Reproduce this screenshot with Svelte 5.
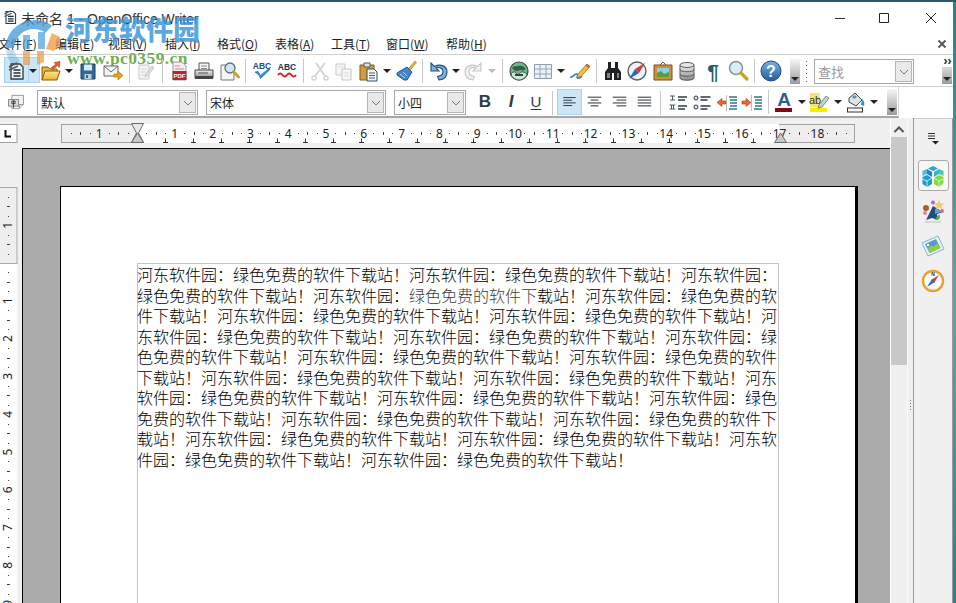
<script>
  const menu = [['文件','F',-2],['编辑','E',55],['视图','V',108],['插入','I',165],['格式','O',217],['表格','A',275],['工具','T',331],['窗口','W',386],['帮助','H',446]];
  const sizes = { i: 24, a: 10, s: 1 };
  function flow(items) {
    let end = 0;
    return items.map(([k, id, x]) => {
      const w = sizes[k];
      const left = Math.round(x - w / 2);
      const r = { k, id, gap: left - end, w };
      end = left + w;
      return r;
    });
  }
  const row1 = flow([
    ['i','doc',16],['a','',33],['i','open',51],['a','',69],['i','save',88],['i','mail',113],['s','',129],['i','edit',145],['s','',162],
    ['i','pdf',179],['i','print',204],['i','preview',229],['s','',245],['i','abc',262],['i','abc2',287],['s','',303],['i','cut',320],['i','copy',344],
    ['i','paste',369],['a','',387],['i','brush',406],['s','',422],['i','undo',438],['a','',456],['i','redo',474],['a','g',492],['s','',502],
    ['i','globe',519],['i','table',543],['a','',561],['i','pencil',580],['s','',596],['i','bino',613],['i','compass',637],['i','picture',663],
    ['i','db',687],['i','pilcrow',713],['i','zoom',738],['s','',754],['i','help',771]
  ]);
  const row2 = flow([
    ['i','num',678],['i','bul',702],['i','outd',727],['i','ind',752],['s','',768],['i','fcolor',784],['a','',802],['i','hl',820],['a','',838],['i','bgc',856],['a','',874]
  ].map(([k,i,x]) => [k,i,x-660]));
  const aligns = [
    ['M6 8h14M6 11h10M6 14h14M6 17h10', 557, true],
    ['M6 8h14M9 11h8M6 14h14M9 17h8', 582, false],
    ['M6 8h14M10 11h10M6 14h14M10 17h10', 607, false],
    ['M6 8h14M6 11h14M6 14h14M6 17h14', 632, false]
  ];
  const CM = 37.8, O = 137;
  const hDigits = [{ n: 1, x: O - CM }];
  for (let n = 1; n <= 18; n++) hDigits.push({ n, x: O + n * CM });
  const hTicks = [];
  for (let c = -2; c < 19; c++) for (const f of [0.25, 0.5, 0.75]) {
    const x = O + (c + f) * CM;
    if (x > 62 && x < 853) hTicks.push({ x: Math.round(x), half: f === 0.5 });
  }
  const tabs = Array.from({ length: 22 }, (_, i) => O + 28 * (i + 1));
  const V = 263;
  const vDigits = [{ n: 1, y: V - CM }];
  for (let n = 1; n <= 9; n++) vDigits.push({ n, y: V + n * CM });
  const vTicks = [];
  for (let c = -2; c < 10; c++) for (const f of [0.25, 0.5, 0.75]) {
    const y = V + (c + f) * CM;
    if (y > 188 && y < 603) vTicks.push({ y: Math.round(y), half: f === 0.5 });
  }
  const body = '河东软件园：绿色免费的软件下载站！'.repeat(23);
</script>

<svg class="defs" width="0" height="0" aria-hidden="true">
  <defs>
    <linearGradient id="gBlue" x1="0" y1="0" x2="0" y2="1"><stop offset="0" stop-color="#7ab0dc"/><stop offset="1" stop-color="#1f5f9e"/></linearGradient>
    <linearGradient id="gYel" x1="0" y1="0" x2="0" y2="1"><stop offset="0" stop-color="#ffe58a"/><stop offset="1" stop-color="#eeb42e"/></linearGradient>
    <linearGradient id="gGray" x1="0" y1="0" x2="0" y2="1"><stop offset="0" stop-color="#f2f2f2"/><stop offset="1" stop-color="#8a8a8a"/></linearGradient>
    <symbol id="doc" viewBox="0 0 24 24">
      <path d="M7 5h9l3 3v12H7z" fill="#f4f7f9" stroke="#2d3a44" stroke-width="1.3"/>
      <path d="M5 8l8-4M5 11l9-4" stroke="#47555f" stroke-width="1.4"/>
      <path d="M9.500 11h7M9.500 14h7M9.500 17h7" stroke="#1f2d38" stroke-width="1.5"/>
    </symbol>
    <symbol id="open" viewBox="0 0 24 24">
      <path d="M3 21V8h6l2 2h7v3" fill="#e8b63c" stroke="#8a5a10"/>
      <path d="M3 21l3-9h15l-3 9z" fill="url(#gYel)" stroke="#8a5a10"/>
      <path d="M12 9l5-4-2-1.500 6-1-.8 6-1.700-2-4 3.500z" fill="#e2602a" stroke="#a33c12" stroke-width=".6"/>
    </symbol>
    <symbol id="save" viewBox="0 0 24 24">
      <path d="M5 5h14v15H5z" fill="#2f6a9b" stroke="#173e60"/>
      <path d="M8 5.500h8v6H8z" fill="#dbe9f3"/>
      <path d="M8.500 15h7v5h-7z" fill="#b9cfdf"/>
      <path d="M10 16h2v3h-2z" fill="#2f6a9b"/>
    </symbol>
    <symbol id="mail" viewBox="0 0 24 24">
      <path d="M3 7h14v10H3z" fill="#f4f4f4" stroke="#6a6a6a"/>
      <path d="M3 7l7 6 7-6" fill="none" stroke="#6a6a6a"/>
      <path d="M13 15h4v-3l5 4.500-5 4.500v-3h-4z" fill="#f0a21e" stroke="#a86a10" stroke-width=".6"/>
    </symbol>
    <symbol id="edit" viewBox="0 0 24 24">
      <path d="M6 6h10v14H6z" fill="#f5f5f5" stroke="#c9c9c9"/>
      <path d="M8 10h6M8 13h5M8 16h5" stroke="#d4d4d4"/>
      <path d="M13 15l6-8 2 1.500-6 8-3 1z" fill="#e2e2e2" stroke="#c4c4c4"/>
    </symbol>
    <symbol id="pdf" viewBox="0 0 24 24">
      <path d="M6 3h9l4 4v14H6z" fill="#f3eeee" stroke="#9e9e9e"/>
      <path d="M8 7h5M8 10h9" stroke="#d58a8a" stroke-width="1.200"/>
      <rect x="5.500" y="12" width="14" height="9" fill="#b5272b"/>
      <text x="12.500" y="19" font-size="6" font-weight="700" text-anchor="middle" fill="#fff" font-family="Liberation Sans, sans-serif">PDF</text>
    </symbol>
    <symbol id="print" viewBox="0 0 24 24">
      <path d="M7 4h10v8H7z" fill="#f5f5f5" stroke="#555"/>
      <path d="M9 7h6M9 9.500h6" stroke="#888"/>
      <path d="M3 11h18v8H3z" fill="url(#gGray)" stroke="#444"/>
      <path d="M3 17h18v3H3z" fill="#444"/>
      <path d="M6 14h10" stroke="#555"/>
    </symbol>
    <symbol id="preview" viewBox="0 0 24 24">
      <path d="M4 6h11l2 3v12H4z" fill="#f4f6f8" stroke="#6d7882"/>
      <circle cx="13" cy="9" r="5" fill="#cfe6f5" stroke="#5f6f7c" stroke-width="1.300"/>
      <path d="M16.500 12.500l5 5.500" stroke="#c9a227" stroke-width="2.800" stroke-linecap="round"/>
    </symbol>
    <symbol id="abc" viewBox="0 0 24 24">
      <text x="12" y="10" font-size="8.500" font-weight="700" text-anchor="middle" fill="#1d4d78" font-family="Liberation Sans, sans-serif">ABC</text>
      <path d="M5 13l4 3 1.500 3.500L20 10.500l-2.500 0L10.500 16.500 8 12.500z" fill="#3a8fd2" stroke="#1d6aa8" stroke-width=".7"/>
    </symbol>
    <symbol id="abc2" viewBox="0 0 24 24">
      <text x="12" y="11" font-size="8.500" font-weight="700" text-anchor="middle" fill="#1e3346" font-family="Liberation Sans, sans-serif">ABC</text>
      <path d="M3 16q2.250-3 4.500 0t4.500 0 4.500 0 4.500 0" fill="none" stroke="#d02424" stroke-width="1.800"/>
    </symbol>
    <symbol id="cut" viewBox="0 0 24 24">
      <path d="M8 4l9 13M17 4l-10 13" stroke="#d4d4d4" stroke-width="2"/>
      <circle cx="6" cy="19" r="2" fill="none" stroke="#d4d4d4" stroke-width="1.500"/>
      <circle cx="18" cy="19" r="2" fill="none" stroke="#d4d4d4" stroke-width="1.500"/>
    </symbol>
    <symbol id="copy" viewBox="0 0 24 24">
      <path d="M4 5h9v11H4z" fill="#f6f6f6" stroke="#c9c9c9"/>
      <path d="M10 10h9v11h-9z" fill="#f8f8f8" stroke="#c4c4c4"/>
      <path d="M6 8h5M12 14h5M12 17h5" stroke="#d8d8d8"/>
    </symbol>
    <symbol id="paste" viewBox="0 0 24 24">
      <path d="M3 6h14v15H3z" fill="#d79b3a" stroke="#80581a"/>
      <path d="M7 4h6v4H7z" fill="#dfe3e6" stroke="#555"/>
      <path d="M10 10h7l3 3v9H10z" fill="#f4f8fb" stroke="#2e4c66"/>
      <path d="M12 14h6M12 16.500h6M12 19h6" stroke="#3b627f"/>
    </symbol>
    <symbol id="brush" viewBox="0 0 24 24">
      <path d="M14 10l7-8 1.500 1.500-7 8.500z" fill="#e5b63a" stroke="#96741a" stroke-width=".6"/>
      <path d="M13 8l5 5-5 8-3 0-7-5 0-2z" fill="#3f87c9" stroke="#1e5a92"/>
      <path d="M6 15l5 4M9 13l4 4" stroke="#bcdcf3" stroke-width=".9"/>
    </symbol>
    <symbol id="undo" viewBox="0 0 24 24">
      <path d="M5 4v8h8l-3-3c3-1.500 7 0 7 3.500 0 3-2.500 4.500-5.500 5L13 21c5-.5 8-3.700 8-8 0-6-7-8.500-12.500-5.500z" fill="#7fb2de" stroke="#1f4f7f" stroke-width="1.100"/>
    </symbol>
    <symbol id="redo" viewBox="0 0 24 24">
      <path d="M19 4v8h-8l3-3c-3-1.500-7 0-7 3.500 0 3 2.500 4.500 5.500 5L11 21c-5-.5-8-3.700-8-8 0-6 7-8.500 12.500-5.500z" fill="#f0f0f0" stroke="#c6c6c6" stroke-width="1.100"/>
    </symbol>
    <symbol id="globe" viewBox="0 0 24 24">
      <circle cx="12" cy="12" r="9" fill="#6fb58a" stroke="#3a4a44" stroke-width="1.200"/>
      <path d="M5 9c3-3 4-1 6-2 3-1 6 0 8 3-2 1-3 2-5 1-2 0-3 1-4 1-2 0-3-1-5-3z" fill="#2f5e4b"/>
      <path d="M4 15c1-2 4-3 5-1s3 2 4 0 5-1 7 1c-1 4-5 6-8 6s-7-2-8-6z" fill="#cfe6d6" stroke="#3a4a44" stroke-width=".9"/>
      <path d="M8 16h8" stroke="#33433d" stroke-width="2"/>
    </symbol>
    <symbol id="table" viewBox="0 0 24 24">
      <path d="M3.500 5.500h17v14h-17z" fill="#eaf2f8" stroke="#8ca0b0"/>
      <path d="M3.500 10h17M3.500 15h17M9 5.500v14M15 5.500v14" stroke="#94a8b8"/>
    </symbol>
    <symbol id="pencil" viewBox="0 0 24 24">
      <path d="M2 18c3 1 5-4 7-3s-1 4 1 4 3-1 4-2" fill="none" stroke="#3c8ad0" stroke-width="1.800"/>
      <path d="M10 15l9-10 3 2.500-9 10-4 1.500z" fill="#f0c040" stroke="#8a6a18" stroke-width=".8"/>
      <path d="M19 5l3 2.500-1.500 1.500-3-2.500z" fill="#d9534a"/>
    </symbol>
    <symbol id="bino" viewBox="0 0 24 24">
      <path d="M7 3h3v6h4V3h3v6l3 4v8h-7v-7h-2v7H4v-8l3-4z" fill="#1f2225"/>
      <path d="M6 14h3v5H6zM16 14h2v5h-2z" fill="#7d8388"/>
    </symbol>
    <symbol id="compass" viewBox="0 0 24 24">
      <circle cx="12" cy="12" r="9" fill="#eff3f6" stroke="#59626a" stroke-width="1.400"/>
      <path d="M20 4l-6 10-4-4z" fill="#d83a34"/>
      <path d="M4 20l6-10 4 4z" fill="#2a68b8"/>
    </symbol>
    <symbol id="picture" viewBox="0 0 24 24">
      <path d="M9 6l3-3 3 3" fill="none" stroke="#7a5520"/>
      <path d="M3 6h18v15H3z" fill="#cf8f42" stroke="#7a4f18"/>
      <path d="M6 9h12v9H6z" fill="#8ad0e8"/>
      <path d="M6 18v-4l4-2 3 3 5-2v5z" fill="#5a9a3a"/>
    </symbol>
    <symbol id="db" viewBox="0 0 24 24">
      <path d="M5 6v13c0 3 14 3 14 0V6z" fill="url(#gGray)" stroke="#5c5c5c"/>
      <ellipse cx="12" cy="6" rx="7" ry="2.500" fill="#e6e6e6" stroke="#5c5c5c"/>
      <path d="M5 10.500c0 3 14 3 14 0M5 15c0 3 14 3 14 0" fill="none" stroke="#5c5c5c"/>
    </symbol>
    <symbol id="pilcrow" viewBox="0 0 24 24">
      <text x="12" y="20" font-size="21" font-weight="700" text-anchor="middle" fill="#1f5f72" font-family="Liberation Sans, sans-serif">¶</text>
    </symbol>
    <symbol id="zoom" viewBox="0 0 24 24">
      <circle cx="10" cy="9" r="6.500" fill="#dcecf6" stroke="#8595a2" stroke-width="1.500"/>
      <path d="M15 14l6 6" stroke="#c9a227" stroke-width="3.200" stroke-linecap="round"/>
    </symbol>
    <symbol id="help" viewBox="0 0 24 24">
      <circle cx="12" cy="12" r="10" fill="url(#gBlue)" stroke="#174b8a"/>
      <text x="12" y="18" font-size="16" font-weight="700" text-anchor="middle" fill="#fff" font-family="Liberation Sans, sans-serif">?</text>
    </symbol>
    <symbol id="style" viewBox="0 0 24 24">
      <path d="M7 4h14v11l-5 5H7z" fill="#f1f1f1" stroke="#8a8a8a"/>
      <path d="M16 20v-5h5" fill="#ddd" stroke="#8a8a8a"/>
      <path d="M3 9h12v8H3z" fill="#dcdcdc" stroke="#777"/>
      <path d="M9 10v9M7 11h4v3H7z" fill="none" stroke="#333"/>
    </symbol>
    <symbol id="num" viewBox="0 0 24 24">
      <path d="M4 6h5M6.500 6v4M4 10h5M3.500 15h6M5.500 15v4M7.500 15v4M3.500 19h6" stroke="#3c4c5a" stroke-width=".9" fill="none"/>
      <path d="M12 7h9M12 10h7M12 16h9M12 19h7" stroke="#2d3a44" stroke-width="1.300"/>
    </symbol>
    <symbol id="bul" viewBox="0 0 24 24">
      <circle cx="6" cy="8" r="2" fill="#dce6ee" stroke="#2d3a44"/>
      <circle cx="6" cy="17" r="2" fill="#dce6ee" stroke="#2d3a44"/>
      <path d="M10.500 7h10M10.500 10h7M10.500 16h10M10.500 19h7" stroke="#2d3a44" stroke-width="1.300"/>
    </symbol>
    <symbol id="outd" viewBox="0 0 24 24">
      <path d="M2 12.500l5-4v2.500h4v3H7v2.500z" fill="#e8683a" stroke="#a83c18" stroke-width=".6"/>
      <path d="M14 7h8M15 10h7M15 13h7M15 16h7M14 19h8" stroke="#2c7a8a" stroke-width="1.300"/>
      <path d="M11.500 5v16" stroke="#aaa" stroke-width=".8"/>
    </symbol>
    <symbol id="ind" viewBox="0 0 24 24">
      <path d="M11 12.500l-5-4v2.500H2v3h4v2.500z" fill="#e8683a" stroke="#a83c18" stroke-width=".6"/>
      <path d="M14 7h8M15 10h7M15 13h7M15 16h7M14 19h8" stroke="#2c7a8a" stroke-width="1.300"/>
      <path d="M11.500 5v16" stroke="#aaa" stroke-width=".8"/>
    </symbol>
    <symbol id="fcolor" viewBox="0 0 24 24">
      <text x="12" y="16" font-size="19" font-weight="700" text-anchor="middle" fill="#2d5f92" font-family="Liberation Sans, sans-serif">A</text>
      <rect x="3" y="18" width="17" height="4" fill="#800a12"/>
    </symbol>
    <symbol id="hl" viewBox="0 0 24 24">
      <rect x="2" y="18" width="17" height="4" fill="#f2f200"/>
      <rect x="2" y="3" width="10" height="14" fill="#f5e27a"/>
      <text x="7" y="14" font-size="11" text-anchor="middle" fill="#333" font-family="Liberation Sans, sans-serif">ab</text>
      <path d="M11 15l7-9 3 2-7 9-4 1z" fill="#c7d2d8" stroke="#5f7a50" stroke-width=".8"/>
    </symbol>
    <symbol id="bgc" viewBox="0 0 24 24">
      <rect x="3.500" y="18" width="15" height="4" fill="#fff" stroke="#333"/>
      <path d="M5 8l6-5 7 7-6 6-7-4z" fill="#dbe4ea" stroke="#3e4a52"/>
      <path d="M8 7l3-2 2 2-3 2z" fill="#7c8a94"/>
      <path d="M18 9c2 2 3 4 2 7-1-1-2-1-3-1z" fill="#2f8fc0"/>
    </symbol>
    <symbol id="cube" viewBox="0 0 24 24">
      <path d="M12 2l5 2.500L12 7 7 4.500z" fill="#2f9fd6"/>
      <path d="M6 5l5 3v5l-5-3z" fill="#1f86c4"/>
      <path d="M1.500 7L6 5v5l-4.500 2z" fill="#4fc0d8"/>
      <path d="M13 8l5-3v5l-5 3z" fill="#38b6c6"/>
      <path d="M18 5l4.500 2v5L18 10z" fill="#4fc6a4"/>
      <path d="M1.500 13L6 11l5 3v6l-5 3-4.500-3z" fill="#1f9fd0"/>
      <path d="M13 14l5-3 4.500 2v6L18 23l-5-3z" fill="#86d93a"/>
      <path d="M6 17l5-3M18 17l-5-3M18 17l4.500-2M18 17v6M6 17v6M6 17l-4.500-2" stroke="#eafaf2" stroke-width=".8" fill="none"/>
    </symbol>
    <symbol id="sstyle" viewBox="0 0 24 24">
      <path d="M5 21L12 7l10 6-6 2 1 6-6-2z" fill="#1c4d84"/>
      <path d="M14 21c5 0 6-3 4-6-1 3-3 2-4 6z" fill="#52b040"/>
      <path d="M14 10c2-1 5 1 6 3l-6 2z" fill="#5aa5e0"/>
      <circle cx="5" cy="9" r="3" fill="#a6602a"/>
      <circle cx="4" cy="14" r="2" fill="#e87bbf"/>
      <circle cx="12" cy="3.500" r="2" fill="#b65dd0"/>
      <path d="M18 1l1.500 3.200 3.500.4-2.600 2.300.7 3.400-3.100-1.800-3 1.800.7-3.400-2.600-2.300 3.500-.4z" fill="#f5cc55"/>
      <circle cx="21" cy="12" r="2" fill="#e36a9a"/>
      <path d="M4 23h16" stroke="#ccc" stroke-width="1.500"/>
    </symbol>
    <symbol id="gallery" viewBox="0 0 24 24">
      <path d="M1 9l16-7 6 13-16 7z" fill="#e8f6f6" stroke="#7fb7c2"/>
      <path d="M4 10l11-5 4.500 9-11 5z" fill="#5a96d6"/>
      <path d="M8.500 19l11-5-2.500-5-5 4-2-2-3 4z" fill="#8cd04a"/>
      <circle cx="7" cy="11" r="1.200" fill="#fff"/>
    </symbol>
    <symbol id="nav" viewBox="0 0 24 24">
      <circle cx="12" cy="12" r="10" fill="#fff" stroke="#e8a030" stroke-width="2.400"/>
      <path d="M18 6l-5 8-3-3z" fill="#d63a44"/>
      <path d="M6 18l5-8 3 3z" fill="#3274c4"/>
      <text x="12" y="7" font-size="5" font-weight="700" text-anchor="middle" fill="#333" font-family="Liberation Sans, sans-serif">N</text>
    </symbol>
  </defs>
</svg>

<div class="app">
  <div class="topstrip"></div>
  <div class="shell">
    <div class="window">
      <header class="titlebar">
        <svg class="titleicon" width="16" height="20" viewBox="2 2 20 22"><use href="#doc" width="24" height="24"/></svg>
        <span class="title">未命名 1 - OpenOffice Writer</span>
        <span class="spring"></span>
        <svg class="winbtn min" width="12" height="12" viewBox="0 0 12 12"><path d="M1 6.500h10" stroke="#333"/></svg>
        <svg class="winbtn max" width="12" height="12" viewBox="0 0 12 12"><path d="M1.500 1.500h9v9h-9z" fill="none" stroke="#222"/></svg>
        <svg class="winbtn close" width="12" height="12" viewBox="0 0 12 12"><path d="M1 1l10 10M11 1L1 11" stroke="#222"/></svg>
      </header>

      <nav class="menubar">
        {#each menu as [label, key, x]}
          <span class="mi" style="left:{x}px">{label}(<u>{key}</u>)</span>
        {/each}
        <svg class="docclose" width="10" height="10" viewBox="0 0 10 10"><path d="M1.500 1.500l7 7M8.500 1.500l-7 7" stroke="#555" stroke-width="1.800"/></svg>
      </nav>

      <section class="tb tb1">
        <span class="hilite newdoc"></span>
        <div class="tools">
          {#each row1 as it}
            {#if it.k === 'i'}
              <svg class="ic" style="margin-left:{it.gap}px" width="24" height="24"><use href="#{it.id}"/></svg>
            {:else if it.k === 'a'}
              <span class="arrow" class:grey={it.id === 'g'} style="margin-left:{it.gap}px"></span>
            {:else}
              <span class="sep" style="margin-left:{it.gap}px"></span>
            {/if}
          {/each}
        </div>
        <span class="handle h1"><i></i></span>
        <span class="grip"></span>
        <div class="combo search"><span class="val muted">查找</span><span class="cbtn"><svg width="10" height="6" viewBox="0 0 10 6"><path d="M1 1l4 4 4-4" fill="none" stroke="#777"/></svg></span></div>
        <span class="handle h2"><b>››</b><i></i></span>
      </section>

      <section class="tb tb2">
        <svg class="stylei" width="20" height="20"><use href="#style"/></svg>
        <div class="combo c1"><span class="val">默认</span><span class="cbtn"><svg width="10" height="6" viewBox="0 0 10 6"><path d="M1 1l4 4 4-4" fill="none" stroke="#777"/></svg></span></div>
        <div class="combo c2"><span class="val">宋体</span><span class="cbtn"><svg width="10" height="6" viewBox="0 0 10 6"><path d="M1 1l4 4 4-4" fill="none" stroke="#777"/></svg></span></div>
        <div class="combo c3"><span class="val">小四</span><span class="cbtn"><svg width="10" height="6" viewBox="0 0 10 6"><path d="M1 1l4 4 4-4" fill="none" stroke="#777"/></svg></span></div>
        <span class="fmt b">B</span>
        <span class="fmt it">I</span>
        <span class="fmt un">U</span>
        <span class="sep s2"></span>
        {#each aligns as [d, x, on]}
          <span class="al" class:on style="left:{x}px"><svg width="26" height="26" viewBox="0 0 26 26"><path {d} stroke="#1e2830" stroke-width="1" fill="none"/></svg></span>
        {/each}
        <span class="sep s3"></span>
        <div class="tools tail">
          {#each row2 as it}
            {#if it.k === 'i'}
              <svg class="ic" style="margin-left:{it.gap}px" width="24" height="24"><use href="#{it.id}"/></svg>
            {:else if it.k === 'a'}
              <span class="arrow" style="margin-left:{it.gap}px"></span>
            {:else}
              <span class="sep" style="margin-left:{it.gap}px"></span>
            {/if}
          {/each}
        </div>
        <span class="handle h3"><i></i></span>
      </section>

      <main class="work">
        <div class="left">
          <svg class="vruler" width="22" height="455" viewBox="0 148 22 455">
            <rect x="0" y="120" width="22" height="483" fill="#f0f0f0"/>
            <rect x="-1" y="187.500" width="18" height="76" fill="#eeeeee" stroke="#a8a8a8"/>
            <rect x="0" y="264" width="17" height="340" fill="#fff"/>
            {#each vTicks as t}
              <rect x={t.half ? 7 : 8} y={t.y} width={t.half ? 3 : 1} height="1" fill="#444"/>
            {/each}
            {#each vDigits as d}
              <text class="rnum" transform="translate(12 {d.y}) rotate(-90)" text-anchor="middle">{d.n}</text>
            {/each}
          </svg>
        </div>
        <div class="center">
          <div class="rulerrow">
            <svg class="corner" width="22" height="30" viewBox="0 0 22 30">
              <rect x="-1" y="6.500" width="18" height="18" fill="#fff" stroke="#a0a0a0"/>
              <path d="M5.500 12v6.500H11" fill="none" stroke="#111" stroke-width="2"/>
            </svg>
            <svg class="hruler" width="868" height="30" viewBox="22 118 868 30">
              <rect x="22" y="118" width="868" height="30" fill="#f0f0f0"/>
              <rect x="61.500" y="124.500" width="793" height="18" fill="#eeeeee" stroke="#a0a0a0"/>
              <rect x="137" y="124" width="642" height="19" fill="#fff"/>
              {#each hTicks as t}
                <rect x={t.x} y={t.half ? 132 : 133} width="1" height={t.half ? 3 : 1} fill="#444"/>
              {/each}
              {#each hDigits as d}
                <text class="rnum" x={d.x} y="138" text-anchor="middle">{d.n}</text>
              {/each}
              {#each tabs as x}
                <path d="M{x + .5} 138.500v3.500M{x - 2} 142.500h5" stroke="#333" fill="none"/>
              {/each}
              <path d="M131.500 123.500h12l-5 9.500 5 9.500h-12l5-9.500z" fill="#e8e8e8" stroke="#6a6a6a"/>
              <path d="M131.500 142.500h12l-6-9.500z" fill="#c8c8c8" stroke="#6a6a6a"/>
              <path d="M774.500 142.500h12l-6-9.500z" fill="#c8c8c8" stroke="#6a6a6a"/>
            </svg>
          </div>
          <div class="doc">
            <div class="page">
              <div class="frame">
                <p class="text">{body}</p>
              </div>
            </div>
          </div>
        </div>
        <div class="vscroll">
          <svg width="16" height="18" viewBox="0 0 16 18"><path d="M3.500 13l4.500-4.500 4.500 4.500" fill="none" stroke="#555" stroke-width="2"/></svg>
          <span class="thumb"></span>
        </div>
        <div class="splitter"><span class="dots"></span></div>
        <aside class="deck">
          <svg class="deckmenu" width="14" height="14" viewBox="0 0 14 14"><path d="M2 2.500h7M2 5h7M2 7.500h7" stroke="#333"/><path d="M6 10h7l-3.500 3.500z" fill="#222"/></svg>
          <span class="tab on"><svg width="24" height="24"><use href="#cube"/></svg></span>
          <span class="tab"><svg width="24" height="24"><use href="#sstyle"/></svg></span>
          <span class="tab"><svg width="24" height="24"><use href="#gallery"/></svg></span>
          <span class="tab"><svg width="24" height="24"><use href="#nav"/></svg></span>
        </aside>
      </main>
    </div>
    <div class="edge"></div>
  </div>

  <div class="fade" aria-hidden="true"></div>
  <div class="wm" aria-hidden="true">
    <svg class="wmlogo" width="62" height="56" viewBox="0 0 62 56">
      <path d="M2 33C2 16 16 5 31 5c7 0 13 2 17 6l-7 7c-3-3-7-4-11-4-11 0-19 8-20 19z" fill="#4b9fd8" opacity=".8"/>
      <path d="M2 35h8c1 4 3 8 6 11l-6 5C5 47 3 41 2 35z" fill="#4b9fd8" opacity=".35"/>
      <path d="M19 20h7v14h-7zM34 17h7v17h-7z" fill="#4b9fd8" opacity=".7"/>
      <path d="M19 36h7v14h-7zM33 36h7v11l-7 3z" fill="#ef9a3c" opacity=".7"/>
      <path d="M42 34l6-16 8 4 0 8-6 6z" fill="#ef9a3c" opacity=".75"/>
    </svg>
    <div class="wmcn">河东软件园</div>
    <div class="wmurl">www.pc0359.cn</div>
  </div>
</div>

<style>
  :global(body) { margin: 0; background: #fff; }
  .defs { position: absolute; }
  .app {
    position: relative;
    width: 956px;
    height: 603px;
    overflow: hidden;
    background: #fff;
    font-family: "Noto Sans CJK SC", "Noto Sans", sans-serif;
    color: #1a1a1a;
  }
  .topstrip { height: 2px; background: #27586e; }
  .shell { display: flex; height: 601px; }
  .window { width: 953px; display: flex; flex-direction: column; background: #fff; }
  .edge { width: 3px; background: linear-gradient(#2f7d86, #5fa7a4 50%, #2f7d86); }

  .titlebar { height: 32px; display: flex; align-items: center; }
  .titleicon { margin-left: 2px; }
  .title { margin-left: 3px; font-size: 14px; color: #333; font-family: "Liberation Sans", "Noto Sans CJK SC", sans-serif; }
  .spring { flex: 1; }
  .winbtn { flex: none; }
  .min { margin-right: 32px; }
  .max { margin-right: 35px; }
  .close { margin-right: 16px; }

  .menubar { position: relative; height: 21px; border-bottom: 1px solid #d0d0d0; box-sizing: border-box; }
  .mi { position: absolute; top: 1px; font-size: 12px; line-height: 18px; white-space: nowrap; color: #222; }
  .docclose { position: absolute; right: 6px; top: 5px; }

  .tb { position: relative; display: flex; align-items: center; box-sizing: border-box; }
  .tb1 { height: 32px; border-bottom: 1px solid #cfcfcf; }
  .tb2 { height: 31px; width: 899px; background: #fff; border-right: 1px solid #d8d8d8; border-bottom: 2px solid #a6a6a6; }
  .tools { display: flex; align-items: center; position: relative; z-index: 1; }
  .ic { flex: none; display: block; }
  .arrow { flex: none; width: 10px; height: 4px; display: flex; justify-content: center; }
  .arrow::before { content: ""; border-left: 4px solid transparent; border-right: 4px solid transparent; border-top: 4px solid #222; }
  .arrow.grey::before { border-top-color: #bbb; }
  .sep { flex: none; width: 1px; height: 24px; background: #c8c8c8; }

  .hilite { position: absolute; box-sizing: border-box; background: #cde6f7; border: 1px solid #a9d3ef; }
  .newdoc { left: 4px; top: 2px; width: 36px; height: 26px; }
  .newdoc::after { content: ""; position: absolute; left: 23px; top: 0; bottom: 0; width: 1px; background: #a9d3ef; }

  .handle { position: absolute; width: 10px; display: block; background: linear-gradient(#f6f6f6, #9c9c9c); }
  .handle i { position: absolute; left: 1px; bottom: 3px; border-left: 4px solid transparent; border-right: 4px solid transparent; border-top: 4px solid #222; }
  .h1 { left: 790px; top: 4px; height: 25px; }
  .h2 { left: 942px; top: 4px; height: 25px; }
  .h2 b { position: absolute; left: 0; top: -4px; font: 700 12px/12px "Liberation Sans", sans-serif; color: #222; background: #fff; width: 11px; text-align: center; }
  .h3 { left: 887px; top: 2px; height: 26px; }
  .grip { position: absolute; left: 806px; top: 6px; width: 1px; height: 22px; background: repeating-linear-gradient(#666 0 1px, transparent 1px 4px); }

  .combo { position: absolute; box-sizing: border-box; background: #fff; border: 1px solid #a8a8a8; display: flex; align-items: center; }
  .val { flex: 1; padding-left: 3px; font-size: 12px; line-height: 18px; color: #222; }
  .val.muted { color: #9a9a9a; font-size: 13px; }
  .cbtn { flex: none; width: 17px; align-self: stretch; margin: 1px; background: #e9e9e9; border: 1px solid #b6b6b6; box-sizing: border-box; display: flex; align-items: center; justify-content: center; }
  .search { left: 814px; top: 4px; width: 100px; height: 25px; }
  .c1 { left: 37px; top: 3px; width: 161px; height: 25px; }
  .c2 { left: 206px; top: 3px; width: 180px; height: 25px; }
  .c3 { left: 394px; top: 3px; width: 72px; height: 25px; }

  .stylei { position: absolute; left: 6px; top: 5px; }
  .fmt { position: absolute; top: 3px; width: 20px; text-align: center; line-height: 24px; color: #2e3a47; font-size: 17px; }
  .b { left: 475px; font-family: "Liberation Sans", sans-serif; font-weight: 700; }
  .it { left: 501px; font-family: "Liberation Sans", sans-serif; font-style: italic; font-weight: 700; font-size: 17px; }
  .un { left: 526px; font-family: "Liberation Sans", sans-serif; text-decoration: underline; text-underline-offset: 2px; font-size: 15px; }
  .s2 { position: absolute; left: 552px; top: 4px; }
  .s3 { position: absolute; left: 660px; top: 4px; }
  .al { position: absolute; top: 2px; width: 25px; height: 26px; box-sizing: border-box; display: flex; align-items: center; justify-content: center; }
  .al.on { background: #cde6f7; border: 1px solid #a9d3ef; }
  .tail { position: absolute; left: 660px; top: 3px; }

  .work { flex: 1; min-height: 0; display: flex; background: #f0f0f0; }
  .left { width: 22px; flex: none; position: relative; }
  .vruler { position: absolute; left: 0; top: 30px; }
  .center { width: 868px; flex: none; display: flex; flex-direction: column; min-height: 0; }
  .rulerrow { height: 30px; flex: none; position: relative; }
  .corner { position: absolute; left: -22px; top: 0; }
  .hruler { display: block; }
  .rnum { font: 12px "Noto Sans", sans-serif; fill: #222; }

  .doc {
    flex: 1;
    min-height: 0;
    overflow: hidden;
    box-sizing: border-box;
    background: #ababab;
    border-top: 1px solid #000;
    border-left: 1px solid #000;
    padding: 37px 0 0 37px;
  }
  .page {
    box-sizing: border-box;
    width: 798px;
    height: 900px;
    background: #fff;
    border-top: 1px solid #000;
    border-left: 1px solid #000;
    border-right: 3px solid #000;
    padding: 76px 0 0 76px;
  }
  .frame { box-sizing: border-box; width: 642px; height: 700px; border: 1px solid #c4c4c4; }
  .text {
    margin: 0 0 0 -1px;
    width: 640px;
    font-size: 16px;
    font-weight: 300;
    line-height: 20.5px;
    color: #000;
    word-break: break-all;
    line-break: anywhere;
  }

  .vscroll { width: 17px; flex: none; box-sizing: border-box; border-left: 1px solid #fff; background: #f0f0f0; display: flex; flex-direction: column; align-items: center; padding-top: 1px; }
  .thumb { width: 16px; height: 228px; background: #c8c8c8; flex: none; }
  .splitter { width: 7px; flex: none; box-sizing: border-box; border-left: 1px solid #fafafa; border-right: 1px solid #9a9a9a; position: relative; }
  .dots { position: absolute; left: 2px; top: 282px; width: 1px; height: 11px; background: repeating-linear-gradient(#777 0 1px, transparent 1px 3px); }
  .deck { flex: 1; box-sizing: border-box; border-right: 1px solid #9a9a9a; border-top: 1px solid #cfcfcf; display: flex; flex-direction: column; align-items: center; padding-top: 10px; }
  .deckmenu { margin-bottom: 15px; margin-top: 2px; }
  .tab { width: 31px; height: 31px; margin-bottom: 4px; display: flex; align-items: center; justify-content: center; box-sizing: border-box; }
  .tab.on { border: 1px solid #aaa; border-radius: 3px; background: #f7f7f7; }

  .fade { position: absolute; left: 408px; top: 286px; width: 126px; height: 18px; background: rgba(255,255,255,.22); }
  .wm { position: absolute; left: 0; top: 14px; width: 210px; height: 60px; pointer-events: none; }
  .wmlogo { position: absolute; left: 4px; top: 1px; }
  .wmcn { position: absolute; left: 65px; top: -2px; font-size: 27px; line-height: 34px; font-weight: 900; letter-spacing: 0; color: rgba(62,152,216,.85); font-family: "Noto Sans CJK SC", sans-serif; white-space: nowrap; }
  .wmurl { position: absolute; left: 67px; top: 34px; font: 700 17.500px/20px "Liberation Serif", serif; letter-spacing: .4px; color: rgba(100,170,70,.95); white-space: nowrap; }
</style>
